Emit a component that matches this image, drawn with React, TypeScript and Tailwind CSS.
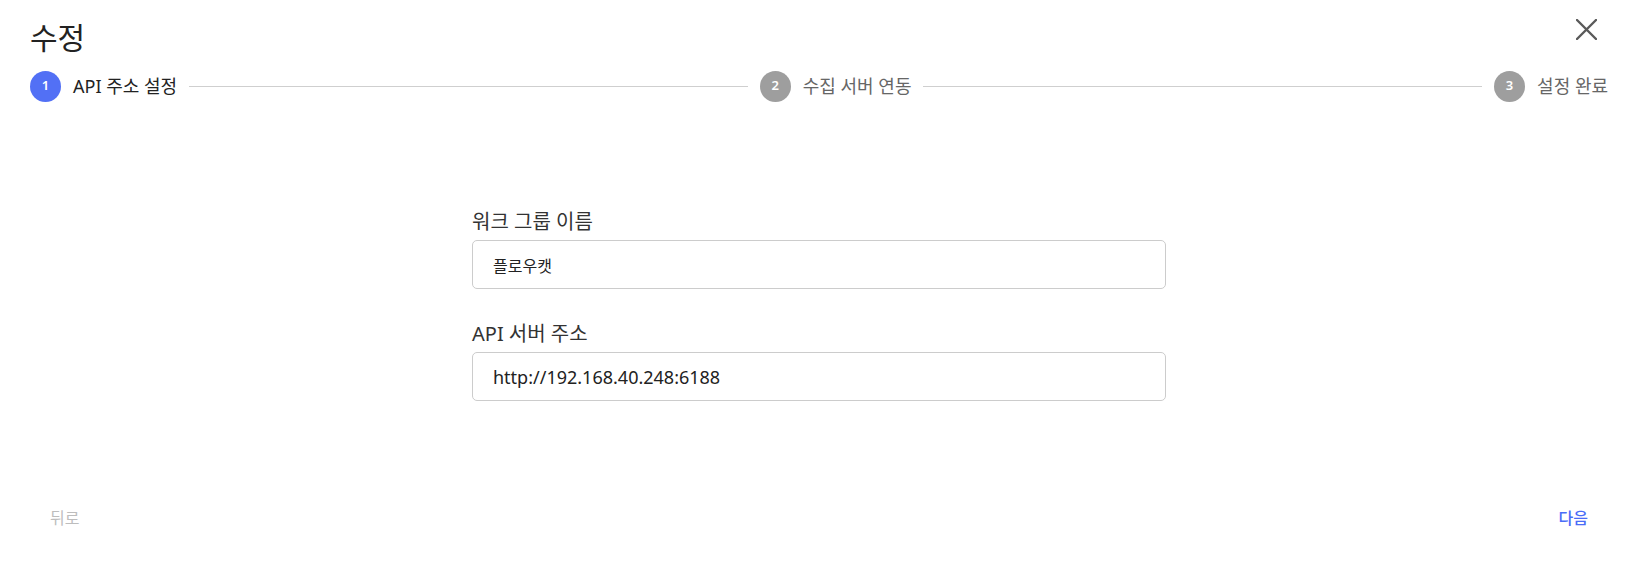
import React from 'react';

interface StepProps {
  index: number;
  label: string;
  active?: boolean;
}

const Step: React.FC<StepProps> = ({ index, label, active }) => {
  return (
    <>
      <div
        className={`w-[31px] h-[31px] rounded-full flex items-center justify-center text-[13px] font-semibold text-white shrink-0 ${
          active ? 'bg-[#5270f5]' : 'bg-[#9e9e9e]'
        }`}
      >
        {index}
      </div>
      <span
        className={`text-[18px] leading-[26px] whitespace-nowrap ${
          active ? 'text-[#222222]' : 'text-[#666666]'
        }`}
      >
        {label}
      </span>
    </>
  );
};

const Line = () => <div className="flex-1 h-px bg-[#cfcfcf]" />;

interface FieldProps {
  label: string;
  value: string;
  latin?: boolean;
}

const Field: React.FC<FieldProps> = ({ label, value, latin }) => {
  return (
    <div className="flex flex-col">
      <label className="text-[20px] leading-[28px] text-[#333333] mb-[4px]">{label}</label>
      <input
        readOnly
        value={value}
        className={`h-[49px] w-full rounded-[5px] border border-[#cccccc] px-[20px] text-[#222222] outline-none bg-white ${
          latin ? 'text-[18px]' : 'text-[16px]'
        }`}
      />
    </div>
  );
};

export default function App() {
  return (
    <div className="relative h-[561px] w-full bg-white flex flex-col font-['Noto_Sans','Noto_Sans_CJK_KR',sans-serif]">
      {/* Header */}
      <div className="px-[30px] pt-[20px]">
        <h1 className="text-[30px] leading-[36px] text-[#222222] font-normal">수정</h1>
      </div>

      <button className="absolute right-[41px] top-[19px] w-[21px] h-[21px]" aria-label="close">
        <svg viewBox="0 0 21 21" className="w-[21px] h-[21px]">
          <path d="M1 1 L20 20 M20 1 L1 20" stroke="#5a5a5a" strokeWidth="2.4" strokeLinecap="round" />
        </svg>
      </button>

      {/* Stepper */}
      <div className="mt-[14px] px-[30px] flex items-center gap-3 h-[32px]">
        <Step index={1} label="API 주소 설정" active />
        <Line />
        <Step index={2} label="수집 서버 연동" />
        <Line />
        <Step index={3} label="설정 완료" />
      </div>

      {/* Form */}
      <div className="mt-[106px] mx-auto w-[694px] flex flex-col gap-[31px]">
        <Field label="워크 그룹 이름" value="플로우캣" />
        <Field label="API 서버 주소" value="http://192.168.40.248:6188" latin />
      </div>

      {/* Footer */}
      <div className="mt-auto pb-[25px] px-[30px] flex justify-between items-center">
        <button className="h-[36px] px-[20px] text-[16px] text-[#bdbdbd]">뒤로</button>
        <button className="h-[36px] px-[20px] text-[16px] font-medium text-[#4a6cf7]">다음</button>
      </div>
    </div>
  );
}
